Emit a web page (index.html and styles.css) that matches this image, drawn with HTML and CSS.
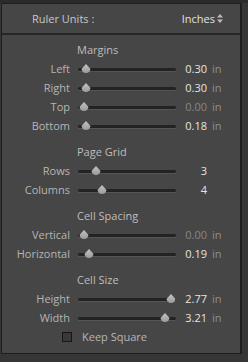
FILE: index.html
```html
<!DOCTYPE html>
<html lang="en">
<head>
    <meta charset="UTF-8">
    <title>Layout</title>
    <link rel="stylesheet" href="styles.css">
</head>
<body>
    <div class="panel">
        <div class="header">
            <span class="header-label">Ruler Units :</span>
            <span class="units">Inches
                <svg class="stepper" width="6" height="9" viewBox="0 0 6 9">
                    <path d="M0 3.5 L3 0 L6 3.5 Z M0 5.5 L3 9 L6 5.5 Z" fill="#bdbdbd"/>
                </svg>
            </span>
        </div>

        <div class="content">
            <div class="group">
                <div class="group-title">Margins</div>
                <div class="row">
                    <span class="label">Left</span>
                    <div class="slider"><div class="track"></div><span class="thumb" style="left: 3px"></span></div>
                    <span class="value">0.30</span><span class="unit">in</span>
                </div>
                <div class="row">
                    <span class="label">Right</span>
                    <div class="slider"><div class="track"></div><span class="thumb" style="left: 3px"></span></div>
                    <span class="value">0.30</span><span class="unit">in</span>
                </div>
                <div class="row">
                    <span class="label">Top</span>
                    <div class="slider"><div class="track"></div><span class="thumb" style="left: 1px"></span></div>
                    <span class="value zero">0.00</span><span class="unit">in</span>
                </div>
                <div class="row">
                    <span class="label">Bottom</span>
                    <div class="slider"><div class="track"></div><span class="thumb" style="left: 3px"></span></div>
                    <span class="value">0.18</span><span class="unit">in</span>
                </div>
            </div>

            <div class="group">
                <div class="group-title">Page Grid</div>
                <div class="row">
                    <span class="label">Rows</span>
                    <div class="slider"><div class="track"></div><span class="thumb" style="left: 13px"></span></div>
                    <span class="value">3</span><span class="unit"></span>
                </div>
                <div class="row">
                    <span class="label">Columns</span>
                    <div class="slider"><div class="track"></div><span class="thumb" style="left: 19px"></span></div>
                    <span class="value">4</span><span class="unit"></span>
                </div>
            </div>

            <div class="group">
                <div class="group-title">Cell Spacing</div>
                <div class="row">
                    <span class="label">Vertical</span>
                    <div class="slider"><div class="track"></div><span class="thumb" style="left: 1px"></span></div>
                    <span class="value zero">0.00</span><span class="unit">in</span>
                </div>
                <div class="row">
                    <span class="label">Horizontal</span>
                    <div class="slider"><div class="track"></div><span class="thumb" style="left: 6px"></span></div>
                    <span class="value">0.19</span><span class="unit">in</span>
                </div>
            </div>

            <div class="group">
                <div class="group-title">Cell Size</div>
                <div class="row">
                    <span class="label">Height</span>
                    <div class="slider"><div class="track"></div><span class="thumb" style="left: 88px"></span></div>
                    <span class="value">2.77</span><span class="unit">in</span>
                </div>
                <div class="row">
                    <span class="label">Width</span>
                    <div class="slider"><div class="track"></div><span class="thumb" style="left: 82px"></span></div>
                    <span class="value">3.21</span><span class="unit">in</span>
                </div>
                <label class="check-row">
                    <span class="checkbox"></span>
                    <span class="check-label">Keep Square</span>
                </label>
            </div>
        </div>
    </div>
</body>
</html>
```

FILE: styles.css
```css
body {
    margin: 0;
    background-color: #363636;
    font-family: "Open Sans", "DejaVu Sans", sans-serif;
    font-size: 11px;
    border-top: 3px solid #2b2b2b;
    height: 359px;
}

.panel {
    margin-left: 1px;
    width: 238px;
    height: 349px;
    background-color: #464646;
    border: 1px solid #1e1e1e;
    border-right-width: 2px;
}

.header {
    height: 29px;
    display: flex;
    justify-content: space-between;
    align-items: center;
    padding: 0 17px 0 30px;
    border-bottom: 2px solid #262626;
}

.header-label {
    color: #c6c6c6;
}

.units {
    display: flex;
    align-items: center;
    gap: 2px;
    color: #e2e2e2;
}

.content {
    padding-top: 5px;
    display: flex;
    flex-direction: column;
    gap: 7px;
}

.group-title {
    height: 19px;
    line-height: 19px;
    padding-left: 75px;
    color: #bdbdbd;
}

.row {
    display: grid;
    grid-template-columns: 68px 98px 23px auto;
    column-gap: 8px;
    height: 19px;
    align-items: center;
}

.label {
    text-align: right;
    color: #b5b5b5;
}

.slider {
    position: relative;
    height: 19px;
}

.track {
    position: absolute;
    left: 0;
    right: 0;
    top: 9px;
    height: 3px;
    border-radius: 2px;
    background-color: #232323;
    box-shadow: 0 1px 0 #555;
}

.thumb {
    position: absolute;
    top: 5px;
    width: 10px;
    height: 9px;
    background: linear-gradient(#c4c4c4, #9a9a9a);
    border-radius: 50% 50% 50% 50% / 30% 30% 70% 70%;
    clip-path: polygon(50% 0, 100% 60%, 100% 100%, 0 100%, 0 60%);
}

.value {
    text-align: right;
    color: #e4e4e4;
}

.value.zero {
    color: #878787;
}

.unit {
    margin-left: -3px;
    color: #8e8e8e;
}

.check-row {
    display: flex;
    align-items: center;
    gap: 10px;
    height: 19px;
    padding-left: 60px;
}

.checkbox {
    width: 8px;
    height: 8px;
    border: 1px solid #161616;
    background-color: #383838;
}

.check-label {
    color: #b5b5b5;
}
```
